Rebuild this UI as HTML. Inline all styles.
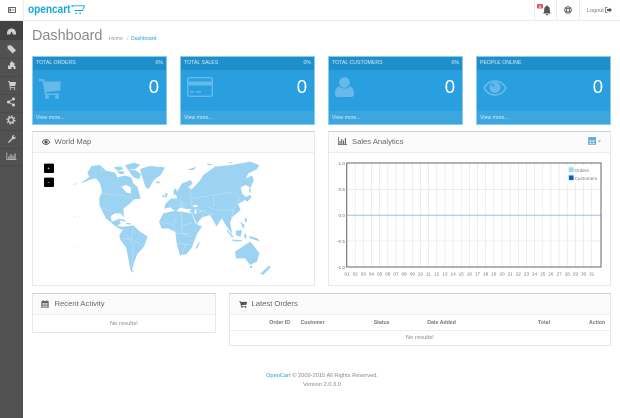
<!DOCTYPE html>
<html><head><meta charset="utf-8"><title>Dashboard</title>
<style>
html,body{margin:0;padding:0;background:#fff}
#p{position:relative;width:620px;height:418px;overflow:hidden;background:#fff;font-family:"Liberation Sans",sans-serif;color:#666;filter:blur(.25px)}
.a{position:absolute;box-sizing:border-box}
.t{position:absolute;white-space:nowrap;line-height:10px;height:10px}
.tile{position:absolute;box-sizing:border-box;top:56px;height:69px;background:#2a9fe0;border:1px solid #8ccbf0}
.th{position:absolute;left:0;right:0;top:0;height:13px;background:#1f8fcb}
.tf{position:absolute;left:0;right:0;bottom:0;height:13px;background:#3ca6df}
.tile .t{color:#d6ebf8;font-size:5.2px}
.tile .num{color:#fff;font-size:18.5px;line-height:20px;height:20px;top:20px}
.panel{position:absolute;box-sizing:border-box;background:#fff;border:1px solid #e8e8e8;border-top:1px solid #cfcfcf}
.ph{position:absolute;left:0;right:0;top:0;height:20px;background:#fbfbfb;border-bottom:1px solid #eee}
.pt{color:#666;font-size:7.65px}
.h{font-size:5.2px;font-weight:bold;color:#777}
svg{position:absolute;overflow:visible}
</style></head><body><div id="p">

<div class="a" style="left:0;top:20px;width:620px;height:1px;background:#eaeaea"></div>
<div class="a" style="left:23px;top:0;width:1px;height:20px;background:#eee"></div>
<div class="a" style="left:534px;top:0;width:1px;height:20px;background:#eee"></div>
<div class="a" style="left:556px;top:0;width:1px;height:20px;background:#eee"></div>
<div class="a" style="left:579px;top:0;width:1px;height:20px;background:#eee"></div>
<svg style="left:8px;top:7px" width="8" height="6" viewBox="0 0 8 6"><rect width="8" height="6" rx=".6" fill="#666"/><rect x="1" y="1" width="6" height="4" fill="#fff"/><rect x="1.5" y="1.5" width="1.5" height="3" fill="#666"/><rect x="3.6" y="2.5" width="3" height="1" fill="#888"/></svg>

<div class="t" style="left:28px;top:3px;height:14px;line-height:14px;font-size:11.500px;font-weight:bold;color:#13a6d8;transform:scaleX(.875);transform-origin:0 50%">opencart</div>
<svg style="left:71px;top:5px" width="14" height="10" viewBox="0 0 14 10"><path d="M0 .8H13.500L11.500 5.500H3.500M1.500 1V2" fill="none" stroke="#13a6d8" stroke-width=".9"/><rect x="4.500" y="7.600" width="1.400" height="1.400" fill="#13a6d8"/><rect x="8.500" y="7.600" width="1.400" height="1.400" fill="#13a6d8"/></svg>

<svg style="left:537px;top:3px" width="16" height="14" viewBox="0 0 16 14"><path d="M6 10.500c1-1 1.200-2 1.200-4 0-2 1-3.200 2.300-3.400V2.200h1v.9c1.300.2 2.300 1.400 2.300 3.400 0 2 .2 3 1.200 4z" fill="#555"/><rect x="9.100" y="11" width="1.800" height="1.200" fill="#555"/><rect x="0" y="1" width="6" height="4.500" rx=".8" fill="#e25a5a"/><text x="3" y="4.800" font-size="4" fill="#fff" text-anchor="middle" font-family="Liberation Sans" font-weight="bold">1</text></svg>
<svg style="left:564px;top:6px" width="8" height="8" viewBox="0 0 8 8"><circle cx="4" cy="4" r="3.300" fill="none" stroke="#555" stroke-width="1"/><circle cx="4" cy="4" r="1.500" fill="none" stroke="#555" stroke-width=".8"/><path d="M1.500 1.500L2.900 2.900M6.500 1.500L5.100 2.900M1.500 6.500L2.900 5.100M6.500 6.500L5.100 5.100" stroke="#555" stroke-width=".9"/></svg>
<div class="t" style="left:587px;top:5.500px;font-size:5.500px;color:#777">Logout</div>
<svg style="left:605px;top:7px" width="7" height="6" viewBox="0 0 7 6"><path d="M2.500.5H.5V5.500H2.500" fill="none" stroke="#666" stroke-width=".8"/><path d="M2 2H4.300V.6L7 3 4.300 5.400V4H2z" fill="#555"/></svg>

<div class="a" style="left:0;top:21px;width:23px;height:397px;background:#515151"></div>
<div class="a" style="left:0;top:21px;width:23px;height:19px;background:#424242"></div>
<div class="a" style="left:0;top:58px;width:23px;height:1px;background:#4a4a4a"></div>
<div class="a" style="left:0;top:76px;width:23px;height:1px;background:#4a4a4a"></div>
<div class="a" style="left:0;top:94px;width:23px;height:1px;background:#4a4a4a"></div>
<div class="a" style="left:0;top:112px;width:23px;height:1px;background:#4a4a4a"></div>
<div class="a" style="left:0;top:130px;width:23px;height:1px;background:#4a4a4a"></div>
<div class="a" style="left:0;top:148px;width:23px;height:1px;background:#4a4a4a"></div>
<div class="a" style="left:0;top:165px;width:23px;height:1px;background:#4a4a4a"></div>
<svg style="left:0;top:20px" width="23" height="150" viewBox="0 0 23 150" fill="#cfcfcf">
<path d="M7 13.500c0-3 1.800-5 4.500-5s4.500 2 4.500 5v1h-3l-1-2.500-.8 0-1 2.500H7z"/>
<path d="M7.500 25.500l3.500-.3 5 5-3.300 3.300-5-5z"/>
<path d="M8 49v-3l1-1 1 1v-3l2-2 1.500 2 1 0v3h1v3h-2v-2h-2v2z"/>
<path d="M8 61h1.500l.5 1h6l-.8 4h-4.700l.2 1h4.500v.8H9.800L9 62H8z"/><circle cx="10.500" cy="69" r=".8"/><circle cx="14.500" cy="69" r=".8"/>
<circle cx="8.500" cy="82" r="1.500"/><circle cx="13.500" cy="79" r="1.500"/><circle cx="13.500" cy="85" r="1.500"/><path d="M8.500 82L13.500 79M8.500 82l5 3" stroke="#cfcfcf" stroke-width=".8"/>
<circle cx="11" cy="100" r="2.600" fill="none" stroke="#cfcfcf" stroke-width="1.500"/><circle cx="11" cy="100" r="4" fill="none" stroke="#cfcfcf" stroke-width="1.200" stroke-dasharray="1.500 1.640"/>
<path d="M8 122l4-4c-.4-1.200.2-3 2.400-3l-1 1.500 1 1 1.500-1c0 2-1.500 3-3 2.500l-4 4z"/>
<path d="M6.500 132.500v7.500h10v-.6h-9.300v-6.900z"/><rect x="8.500" y="136" width="1" height="3.400"/><rect x="10.500" y="134" width="1" height="5.400"/><rect x="12.500" y="135.500" width="1" height="3.900"/><rect x="14.500" y="133.500" width="1" height="5.900"/>
</svg>

<div class="t" style="left:32px;top:25.500px;height:20px;line-height:20px;font-size:14.400px;color:#8a8a8a">Dashboard</div>
<div class="t" style="left:109px;top:33.500px;font-size:5.200px;color:#999">Home</div>
<div class="t" style="left:127px;top:33.500px;font-size:5.200px;color:#aaa">/</div>
<div class="t" style="left:131px;top:33.500px;font-size:5.200px;color:#2a9fd6">Dashboard</div>

<div class="tile" style="left:32px;width:135px"><div class="th"></div><div class="tf"></div>
<div class="t" style="left:3px;top:.5px">TOTAL ORDERS</div><div class="t" style="right:3px;top:.5px">0%</div><div class="t num" style="right:7px">0</div><div class="t" style="left:3px;top:56px">View more...</div>
<svg style="left:6px;top:22px" width="23" height="20" viewBox="0 0 23 20" fill="#66b9e9"><path d="M0 0H4.500L5.500 2.500H21.500V11.500L7.500 13 8 14.500H20.500V16H6L3.500 2H0z"/><circle cx="8" cy="18" r="2"/><circle cx="18" cy="18" r="2"/></svg></div>

<div class="tile" style="left:180px;width:135px"><div class="th"></div><div class="tf"></div>
<div class="t" style="left:3px;top:.5px">TOTAL SALES</div><div class="t" style="right:3px;top:.5px">0%</div><div class="t num" style="right:7px">0</div><div class="t" style="left:3px;top:56px">View more...</div>
<svg style="left:6px;top:20px" width="26" height="20" viewBox="0 0 26 20"><rect x=".7" y=".7" width="24.600" height="18.600" rx="2" fill="none" stroke="#66b9e9" stroke-width="1.400"/><rect x="1" y="4.500" width="24" height="4" fill="#66b9e9"/><rect x="3" y="14" width="4" height="1.500" fill="#66b9e9"/><rect x="9" y="14" width="5" height="1.500" fill="#66b9e9"/></svg></div>

<div class="tile" style="left:328px;width:135px"><div class="th"></div><div class="tf"></div>
<div class="t" style="left:3px;top:.5px">TOTAL CUSTOMERS</div><div class="t" style="right:3px;top:.5px">0%</div><div class="t num" style="right:7px">0</div><div class="t" style="left:3px;top:56px">View more...</div>
<svg style="left:6px;top:20px" width="19" height="20" viewBox="0 0 19 20" fill="#66b9e9"><circle cx="9.500" cy="5.500" r="5.300"/><path d="M0 17c0-5 2-7.500 4.500-7.500 1.500 1.500 3 2 5 2s3.500-.5 5-2C17 9.500 19 12 19 17c0 2-1 3-3 3H3c-2 0-3-1-3-3z"/></svg></div>

<div class="tile" style="left:476px;width:135px"><div class="th"></div><div class="tf"></div>
<div class="t" style="left:3px;top:.5px">PEOPLE ONLINE</div><div class="t num" style="right:7px">0</div><div class="t" style="left:3px;top:56px">View more...</div>
<svg style="left:6px;top:23px" width="24" height="16" viewBox="0 0 24 16"><path d="M1 8C4 3 8 1 12 1s8 2 11 7c-3 5-7 7-11 7S4 13 1 8z" fill="none" stroke="#66b9e9" stroke-width="1.700"/><circle cx="12" cy="7.500" r="5.500" fill="#66b9e9"/><circle cx="10" cy="5.500" r="1.800" fill="#2a9fe0" opacity=".6"/></svg></div>

<div class="panel" style="left:32px;top:131px;width:283px;height:155px"><div class="ph"></div></div>
<svg style="left:41.500px;top:139px" width="8" height="6" viewBox="0 0 8 6"><path d="M.3 3C1.500 1.200 2.700.5 4 .5S6.500 1.200 7.700 3C6.500 4.800 5.300 5.500 4 5.500S1.500 4.800.3 3z" fill="none" stroke="#555" stroke-width=".8"/><circle cx="4" cy="3" r="1.600" fill="#555"/></svg>
<div class="t pt" style="left:54.500px;top:136.500px">World Map</div>

<div class="panel" style="left:328px;top:131px;width:283px;height:155px"><div class="ph"></div></div>
<svg style="left:338px;top:137px" width="9" height="8" viewBox="0 0 9 8" fill="#555"><path d="M0 0h.7v7.300H9V8H0z"/><rect x="1.500" y="4" width="1" height="3"/><rect x="3.300" y="2" width="1" height="5"/><rect x="5.100" y="3.500" width="1" height="3.500"/><rect x="6.900" y="1" width="1" height="6"/></svg>
<div class="t pt" style="left:352px;top:136.500px">Sales Analytics</div>
<svg style="left:588px;top:137px" width="14" height="8" viewBox="0 0 14 8"><rect x=".2" y=".2" width="7.800" height="7.600" rx=".6" fill="#4aa3d8"/><path d="M.8 3H7.400M.8 4.700H7.400M.8 6.300H7.400M2.700 2.800V7.500M5.200 2.800V7.500" stroke="#fff" stroke-width=".5"/><path d="M10 3.500H13L11.500 5z" fill="#4aa3d8"/></svg>

<svg style="left:0;top:130px" width="320" height="160" viewBox="0 0 960 480">
<rect x="132" y="101" width="30" height="28" rx="3" fill="#000"/><rect x="132" y="143" width="30" height="28" rx="3" fill="#000"/>
<path d="M143 115h6M146 112v6M143 157h6" stroke="#bbb" stroke-width="2"/>
<g fill="#9dd3f2">
<path d="M262 128L275 108L300 105L318 122L345 128L352 142L374 136L394 142L400 160L412 170L422 206L402 208L388 222L370 236L372 262L362 250L345 250L332 258L335 275L358 268L362 280L352 288L364 290L386 290L380 298L362 298L345 288L318 265L305 240L298 225L298 205L306 185L300 160L288 145L272 148L258 155L240 160L256 150L268 140z"/>
<path d="M364 170L378 165L393 172L392 190L380 188z" fill="#fff"/>
<path d="M420 117L450 108L495 112L482 135L462 150L445 178L436 170L428 145z"/>
<path d="M340 112l22-3 8 8-15 6zM375 105l28-7 18 7-15 12-22 3zM385 120l20 0 18 12-5 15-15-4-10-10zM350 125l18-2 6 8-12 2z"/>
<path d="M345 266l25 2 10 6-15-1z M378 278l16 2-3 4-12-2z"/>
<path d="M358 315L375 290L400 286L420 305L443 320L432 350L412 372L402 398L396 422L405 428L392 424L385 385L378 352L360 328z"/>
<path d="M477 275L490 250L520 243L545 245L575 250L586 280L606 290L592 310L580 340L576 352L560 372L540 376L530 340L526 306L505 295L485 296z"/>
<path d="M597 335L586 355L591 356L599 340z"/>
<path d="M492 236L497 220L514 205L532 205L527 192L546 160L572 150L578 160L565 172L575 178L600 152L610 135L645 110L695 105L750 95L778 105L770 118L745 130L737 146L756 136L762 150L752 172L736 165L722 172L726 190L742 206L728 214L714 222L722 240L696 262L690 278L697 312L682 292L665 265L650 290L630 255L606 262L590 282L576 250L560 238L540 232L528 245L510 232z"/>
<path d="M520 182l8-8 4 16-10 6zM495 190l8-1-2 12-5 2zM488 195l5-1 0 7-5 1zM468 155l14 0-5 5-9-1z"/>
<path d="M720 275l14 10-4 12zM735 262l6 5-2 12-5-6zM748 165l5 18-5 8zM738 200l14-5 2 8-12 12-5-3z"/>
<path d="M682 298l20 24-6 0-16-20zM696 328l30 3 0 4-28-2zM708 302l18-2-4 20-14-4zM732 315l6-5 2 15-6 0zM748 318l26 8 4 8-12-4-18-6z"/>
<path d="M705 365L735 345L750 335L760 345L778 370L771 395L750 405L735 385L708 385z"/>
<path d="M750 408l8 0-3 7-5-2z"/><path d="M780 432L808 406L812 412L790 434z"/>
<path d="M222 256l5 5-3 0z M230 350l3 2-3 1z M560 120l30-10-10 10z M620 100l20 3-15 3z M685 97l15 0-10 4z M800 350l4 5-3 0z M216 163l16-3-4 3z"/>
</g>
<g fill="none" stroke="#dff1fb" stroke-width=".9">
<path d="M305 108L306 130M306 190L372 197L400 208M305 233L335 245M380 312L400 345L395 410M360 325L400 330L425 345M400 288L395 325"/>
<path d="M478 275L520 285L530 260M545 245L545 310L575 320M520 285L530 310L570 310M575 280L545 285M535 340L570 345M545 375L555 345"/>
<path d="M510 232L540 225L560 238M515 205L560 225M540 205L552 235M570 178L575 225L600 240L640 255M575 205L640 195L700 185L720 205L700 240L650 240L620 230M640 195L640 230M700 240L695 262M600 240L610 262M575 250L620 240"/>
</g>
<ellipse cx="586" cy="228" rx="8" ry="3" fill="#fff"/><rect x="540" y="237" width="32" height="5" fill="#fff"/><rect x="584" y="238" width="5" height="14" fill="#fff"/>
</svg>

<svg style="left:0;top:0" width="620" height="418" viewBox="0 0 620 418" font-family="Liberation Sans" font-size="4.700" fill="#777">
<path d="M347 163V267M355.200 163V267M363.300 163V267M371.500 163V267M379.600 163V267M387.800 163V267M396 163V267M404.100 163V267M412.300 163V267M420.400 163V267M428.600 163V267M436.700 163V267M444.900 163V267M453.100 163V267M461.200 163V267M469.400 163V267M477.500 163V267M485.700 163V267M493.800 163V267M502 163V267M510.200 163V267M518.300 163V267M526.500 163V267M534.600 163V267M542.800 163V267M550.900 163V267M559.100 163V267M567.300 163V267M575.400 163V267M583.600 163V267M591.700 163V267M347 189.500H601M347 241H601" stroke="#e6e6e6" stroke-width=".7" fill="none"/>
<path d="M347 215.300H601" stroke="#9cc3ea" stroke-width="1" fill="none"/>
<rect x="346.700" y="163" width="254.300" height="104" fill="none" stroke="#666" stroke-width="1"/>
<g text-anchor="end"><text x="345" y="165">1.0</text><text x="345" y="191">0.5</text><text x="345" y="217">0.0</text><text x="345" y="243">-0.5</text><text x="345" y="269">-1.0</text></g>
<g text-anchor="middle"><text x="347" y="275.300">01</text><text x="355.200" y="275.300">02</text><text x="363.300" y="275.300">03</text><text x="371.500" y="275.300">04</text><text x="379.600" y="275.300">05</text><text x="387.800" y="275.300">06</text><text x="396" y="275.300">07</text><text x="404.100" y="275.300">08</text><text x="412.300" y="275.300">09</text><text x="420.400" y="275.300">10</text><text x="428.600" y="275.300">11</text><text x="436.700" y="275.300">12</text><text x="444.900" y="275.300">13</text><text x="453.100" y="275.300">14</text><text x="461.200" y="275.300">15</text><text x="469.400" y="275.300">16</text><text x="477.500" y="275.300">17</text><text x="485.700" y="275.300">18</text><text x="493.800" y="275.300">19</text><text x="502" y="275.300">20</text><text x="510.200" y="275.300">21</text><text x="518.300" y="275.300">22</text><text x="526.500" y="275.300">23</text><text x="534.600" y="275.300">24</text><text x="542.800" y="275.300">25</text><text x="550.900" y="275.300">26</text><text x="559.100" y="275.300">27</text><text x="567.300" y="275.300">28</text><text x="575.400" y="275.300">29</text><text x="583.600" y="275.300">30</text><text x="591.700" y="275.300">31</text></g>
<rect x="567" y="166" width="32" height="17" fill="#fff" opacity=".85"/>
<rect x="568" y="166.500" width="6" height="6" fill="#e4f3fb"/><rect x="569" y="167.500" width="4.500" height="4.500" fill="#9fd5f2"/>
<rect x="568" y="174.500" width="6" height="6" fill="#dfe9f6"/><rect x="569" y="175.500" width="4.500" height="4.500" fill="#0d5ec4"/>
<text x="574.500" y="171.800">Orders</text><text x="574.500" y="180">Customers</text>
</svg>

<div class="panel" style="left:32px;top:293px;width:184px;height:40px"><div class="ph"></div></div>
<svg style="left:41px;top:300px" width="8" height="8" viewBox="0 0 8 8"><rect x=".3" y="1" width="7.400" height="6.800" rx=".6" fill="#666"/><path d="M1 3.300H7M1 4.900H7M1 6.400H7M2.500 3V7.500M4 3V7.500M5.500 3V7.500" stroke="#eee" stroke-width=".45"/><rect x="1.700" y="0" width=".9" height="1.800" fill="#666"/><rect x="5.400" y="0" width=".9" height="1.800" fill="#666"/></svg>
<div class="t pt" style="left:54.500px;top:298.500px">Recent Activity</div>
<div class="t" style="left:110px;top:318.500px;font-size:5.800px;color:#888">No results!</div>

<div class="panel" style="left:229px;top:293px;width:382px;height:53px"><div class="ph"></div><div class="a" style="left:0;right:0;top:36px;height:1px;background:#eee"></div></div>
<svg style="left:239px;top:300.500px" width="8" height="7" viewBox="0 0 8 7" fill="#555"><path d="M0 0H1.500L1.800 .9H8L7.500 3.800 2.400 4.400 2.600 5H7.300V5.600H2L1 .6H0z"/><circle cx="3" cy="6.300" r=".7"/><circle cx="6.500" cy="6.300" r=".7"/></svg>
<div class="t pt" style="left:251.500px;top:298.500px">Latest Orders</div>
<div class="t h" style="left:269.300px;top:317.500px">Order ID</div>
<div class="t h" style="left:300.500px;top:317.500px">Customer</div>
<div class="t h" style="left:373.700px;top:317.500px">Status</div>
<div class="t h" style="left:427.300px;top:317.500px">Date Added</div>
<div class="t h" style="left:538px;top:317.500px">Total</div>
<div class="t h" style="left:589px;top:317.500px">Action</div>
<div class="t" style="left:406px;top:332.700px;font-size:5.800px;color:#888">No results!</div>

<div class="t" style="left:266px;top:371.300px;font-size:5.700px;color:#888"><span style="color:#2a9fd6">OpenCart</span> © 2009-2015 All Rights Reserved.</div>
<div class="t" style="left:303px;top:379.500px;font-size:5.700px;color:#888">Version 2.0.3.0</div>
</div></body></html>
